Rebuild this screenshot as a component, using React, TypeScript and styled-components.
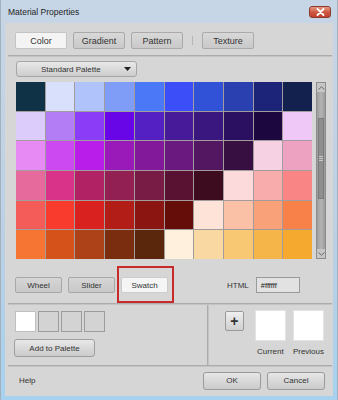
import styled, { createGlobalStyle } from 'styled-components';

const GlobalStyle = createGlobalStyle`
  html, body {
    margin: 0;
    padding: 0;
    background: #ffffff;
  }
  body {
    font-family: 'Liberation Sans', Arial, sans-serif;
    color: #333;
  }
  * {
    box-sizing: border-box;
  }
`;

const palette = [
  ['#0f3247', '#d8e0fc', '#b0c3fb', '#7f9df7', '#4b78f7', '#3b4ef7', '#3152d6', '#2a3fb0', '#1c2479', '#13214f'],
  ['#dcccfb', '#b37df6', '#8a3cf6', '#6806e8', '#5420c4', '#471a99', '#3a177f', '#2b1062', '#1d073f', '#efc8f7'],
  ['#e78af3', '#cc48f1', '#b91de9', '#9a19b9', '#82199b', '#6a1a7f', '#521760', '#370f41', '#f6d0e3', '#eda2c1'],
  ['#e76a9c', '#d93289', '#b02263', '#922052', '#781b45', '#5a1232', '#3e0c1f', '#fcdadb', '#f8adac', '#f98585'],
  ['#f45c59', '#f93b2e', '#d92220', '#b31d18', '#8a1511', '#650d09', '#fee3d9', '#fbc1a7', '#f9a178', '#f88049'],
  ['#f77532', '#d5521b', '#ad4118', '#7b2d10', '#5a260c', '#fef0dd', '#f9d8a1', '#f8c972', '#f6b548', '#f6a92f'],
];

const recent = ['#ffffff', '', '', ''];

function App() {
  return (
    <>
      <GlobalStyle />
      <Window>
        <TitleBar>
          <Title>Material Properties</Title>
          <CloseButton>
            <svg width='9' height='8' viewBox='0 0 9 8'>
              <path d='M1.5 1 L7.5 7 M7.5 1 L1.5 7' stroke='#fff' strokeWidth='1.8' strokeLinecap='round' />
            </svg>
          </CloseButton>
        </TitleBar>
        <Body>
          <TabRow>
            <Tab $active>Color</Tab>
            <Tab>Gradient</Tab>
            <Tab>Pattern</Tab>
            <TabSeparator />
            <Tab>Texture</Tab>
          </TabRow>
          <Rule $top={6} />
          <PaletteArea>
            <Dropdown>
              <span>Standard Palette</span>
              <svg width='7' height='4' viewBox='0 0 7 4'>
                <path d='M0 0 H7 L3.5 4 Z' fill='#222' />
              </svg>
            </Dropdown>
            <GridRow>
              <SwatchGrid>
                {palette.flat().map((c, i) => (
                  <Cell key={i} $color={c} />
                ))}
              </SwatchGrid>
              <Scrollbar>
                <ScrollArrow>
                  <svg width='7' height='4' viewBox='0 0 7 4'>
                    <path d='M0.5 3.5 L3.5 0.8 L6.5 3.5' stroke='#6a6a6a' fill='none' />
                  </svg>
                </ScrollArrow>
                <ScrollTrack>
                  <Thumb>
                    <Grip />
                    <Grip />
                    <Grip />
                  </Thumb>
                </ScrollTrack>
                <ScrollArrow>
                  <svg width='7' height='4' viewBox='0 0 7 4'>
                    <path d='M0.5 0.5 L3.5 3.2 L6.5 0.5' stroke='#6a6a6a' fill='none' />
                  </svg>
                </ScrollArrow>
              </Scrollbar>
            </GridRow>
          </PaletteArea>
          <ModeRow>
            <ModeButton>Wheel</ModeButton>
            <ModeButton>Slider</ModeButton>
            <Highlight>
              <ModeButton $active>Swatch</ModeButton>
            </Highlight>
            <HtmlLabel>HTML</HtmlLabel>
            <HexField>#ffffff</HexField>
          </ModeRow>
          <Rule $top={10} />
          <LowerSection>
            <LeftPanel>
              <RecentRow>
                {recent.map((c, i) => (
                  <RecentBox key={i} $color={c} />
                ))}
              </RecentRow>
              <WideButton>Add to Palette</WideButton>
            </LeftPanel>
            <VDivider />
            <RightPanel>
              <PlusButton>+</PlusButton>
              <PreviewColumn>
                <PreviewBox />
                <PreviewLabel>Current</PreviewLabel>
              </PreviewColumn>
              <PreviewColumn>
                <PreviewBox />
                <PreviewLabel>Previous</PreviewLabel>
              </PreviewColumn>
            </RightPanel>
          </LowerSection>
          <Rule $top={0} />
          <Footer>
            <HelpText>Help</HelpText>
            <FooterButtons>
              <DialogButton>OK</DialogButton>
              <DialogButton>Cancel</DialogButton>
            </FooterButtons>
          </Footer>
        </Body>
      </Window>
    </>
  );
}

export default App;

const Window = styled.div`
  width: 338px;
  height: 400px;
  display: flex;
  flex-direction: column;
  padding: 0 4px 4px;
  background: linear-gradient(#c7d6e6 0%, #bcd0e4 60%, #a6d2ef 100%);
  border-left: 1px solid #a3b0bd;
  border-right: 1px solid #a3b0bd;
`;

const TitleBar = styled.div`
  height: 23px;
  display: flex;
  align-items: center;
  justify-content: space-between;
  padding: 0 2px 0 3px;
`;

const Title = styled.div`
  font-size: 8.5px;
  color: #1e1e1e;
`;

const CloseButton = styled.div`
  width: 22px;
  height: 12px;
  margin-top: 1px;
  display: flex;
  align-items: center;
  justify-content: center;
  border: 1px solid #8c3b2f;
  border-radius: 3px;
  background: linear-gradient(#e59a86 0%, #cf5a44 50%, #c0402c 100%);
`;

const Body = styled.div`
  flex: 1;
  display: flex;
  flex-direction: column;
  background: #d6d6d6;
`;

const TabRow = styled.div`
  display: flex;
  align-items: center;
  gap: 6px;
  padding: 9px 0 0 10px;
`;

const Tab = styled.div<{ $active?: boolean }>`
  width: 52px;
  height: 17px;
  display: flex;
  align-items: center;
  justify-content: center;
  font-size: 9px;
  color: #333;
  border: 1px solid ${(p) => (p.$active ? '#c4c4c4' : '#aaaaaa')};
  border-radius: 2px;
  background: ${(p) => (p.$active ? '#f4f4f4' : 'linear-gradient(#d8d8d8, #c9c9c9)')};
`;

const TabSeparator = styled.div`
  width: 1px;
  height: 9px;
  margin: 0 3px;
  background: #b5b5b5;
`;

const Rule = styled.div<{ $top: number }>`
  height: 2px;
  margin: ${(p) => p.$top}px 1px 0 3px;
  background: #acacac;
  border-bottom: 1px solid #c4c4c4;
`;

const PaletteArea = styled.div`
  padding: 4px 0 0 11px;
`;

const Dropdown = styled.div`
  width: 121px;
  height: 16px;
  display: flex;
  align-items: center;
  justify-content: space-between;
  padding: 0 5px 0 24px;
  font-size: 8px;
  color: #333;
  border: 1px solid #a6a6a6;
  border-radius: 3px;
  background: linear-gradient(#e8e8e8, #cdcdcd);
`;

const GridRow = styled.div`
  display: flex;
  gap: 4px;
  margin-top: 5px;
`;

const SwatchGrid = styled.div`
  width: 296px;
  height: 177px;
  display: grid;
  grid-template-columns: repeat(10, 1fr);
  grid-template-rows: repeat(6, 1fr);
  gap: 1px;
  background: #a39c9c;
`;

const Cell = styled.div<{ $color: string }>`
  background: ${(p) => p.$color};
`;

const Scrollbar = styled.div`
  width: 10px;
  height: 177px;
  display: flex;
  flex-direction: column;
  border: 1px solid #8c8c8c;
  background: #b9b9b9;
`;

const ScrollArrow = styled.div`
  height: 9px;
  display: flex;
  align-items: center;
  justify-content: center;
  background: #c6c6c6;
`;

const ScrollTrack = styled.div`
  flex: 1;
  padding: 26px 1px 50px;
  background: linear-gradient(90deg, #9c9c9c, #b4b4b4 50%, #9c9c9c);
`;

const Thumb = styled.div`
  height: 100%;
  display: flex;
  flex-direction: column;
  justify-content: center;
  align-items: center;
  gap: 1px;
  border: 1px solid #7a7a7a;
  background: #8f8f8f;
`;

const Grip = styled.div`
  width: 4px;
  height: 1px;
  background: #c8c8c8;
`;

const ModeRow = styled.div`
  display: flex;
  align-items: center;
  gap: 6px;
  margin-top: 18px;
  padding-left: 10px;
`;

const ModeButton = styled.div<{ $active?: boolean }>`
  width: 47px;
  height: 16px;
  display: flex;
  align-items: center;
  justify-content: center;
  font-size: 8px;
  color: #333;
  border: 1px solid ${(p) => (p.$active ? '#cccccc' : '#a8a8a8')};
  border-radius: 2px;
  background: ${(p) => (p.$active ? '#f5f5f5' : 'linear-gradient(#d6d6d6, #c8c8c8)')};
`;

const Highlight = styled.div`
  position: relative;
  &::after {
    content: '';
    position: absolute;
    top: -11px;
    left: -4px;
    right: -6px;
    bottom: -10px;
    border: 2px solid #c62a2a;
  }
`;

const HtmlLabel = styled.div`
  margin-left: 53px;
  font-size: 8px;
  color: #333;
`;

const HexField = styled.div`
  width: 44px;
  height: 16px;
  margin-left: 1px;
  display: flex;
  align-items: center;
  padding-left: 4px;
  font-size: 7.5px;
  color: #222;
  border: 1px solid #9a9a9a;
  background: #e2e2e2;
`;

const LowerSection = styled.div`
  height: 60px;
  display: flex;
`;

const LeftPanel = styled.div`
  width: 202px;
  padding: 6px 0 0 10px;
`;

const RecentRow = styled.div`
  display: flex;
  gap: 2px;
`;

const RecentBox = styled.div<{ $color: string }>`
  width: 21px;
  height: 21px;
  border: 1px solid ${(p) => (p.$color ? '#c0c0c0' : '#9c9c9c')};
  background: ${(p) => p.$color || '#d3d3d3'};
`;

const WideButton = styled.div`
  width: 81px;
  height: 18px;
  margin: 7px 0 0 -1px;
  display: flex;
  align-items: center;
  justify-content: center;
  font-size: 8px;
  color: #333;
  border: 1px solid #9e9e9e;
  border-radius: 3px;
  background: linear-gradient(#e8e8e8, #cbcbcb);
`;

const VDivider = styled.div`
  width: 2px;
  background: #acacac;
  border-right: 1px solid #c4c4c4;
`;

const RightPanel = styled.div`
  flex: 1;
  display: flex;
  align-items: flex-start;
  gap: 7px;
  padding: 6px 9px 0 16px;
`;

const PlusButton = styled.div`
  width: 19px;
  height: 20px;
  margin-right: 4px;
  display: flex;
  align-items: center;
  justify-content: center;
  font-size: 14px;
  font-weight: bold;
  color: #333;
  border: 1px solid #9a9a9a;
  border-radius: 2px;
  background: linear-gradient(#efefef, #cfcfcf);
`;

const PreviewColumn = styled.div`
  display: flex;
  flex-direction: column;
  align-items: center;
  margin-top: -1px;
`;

const PreviewBox = styled.div`
  width: 31px;
  height: 31px;
  background: #ffffff;
  border: 1px solid #e4e4e4;
`;

const PreviewLabel = styled.div`
  margin-top: 6px;
  font-size: 8px;
  color: #333;
`;

const Footer = styled.div`
  flex: 1;
  display: flex;
  align-items: center;
  justify-content: space-between;
  padding: 0 8px 2px 14px;
`;

const HelpText = styled.div`
  font-size: 8px;
  color: #333;
`;

const FooterButtons = styled.div`
  display: flex;
  gap: 6px;
`;

const DialogButton = styled.div`
  width: 58px;
  height: 18px;
  display: flex;
  align-items: center;
  justify-content: center;
  font-size: 8px;
  color: #333;
  border: 1px solid #9a9a9a;
  border-radius: 3px;
  background: linear-gradient(#e6e6e6, #cbcbcb);
`;
